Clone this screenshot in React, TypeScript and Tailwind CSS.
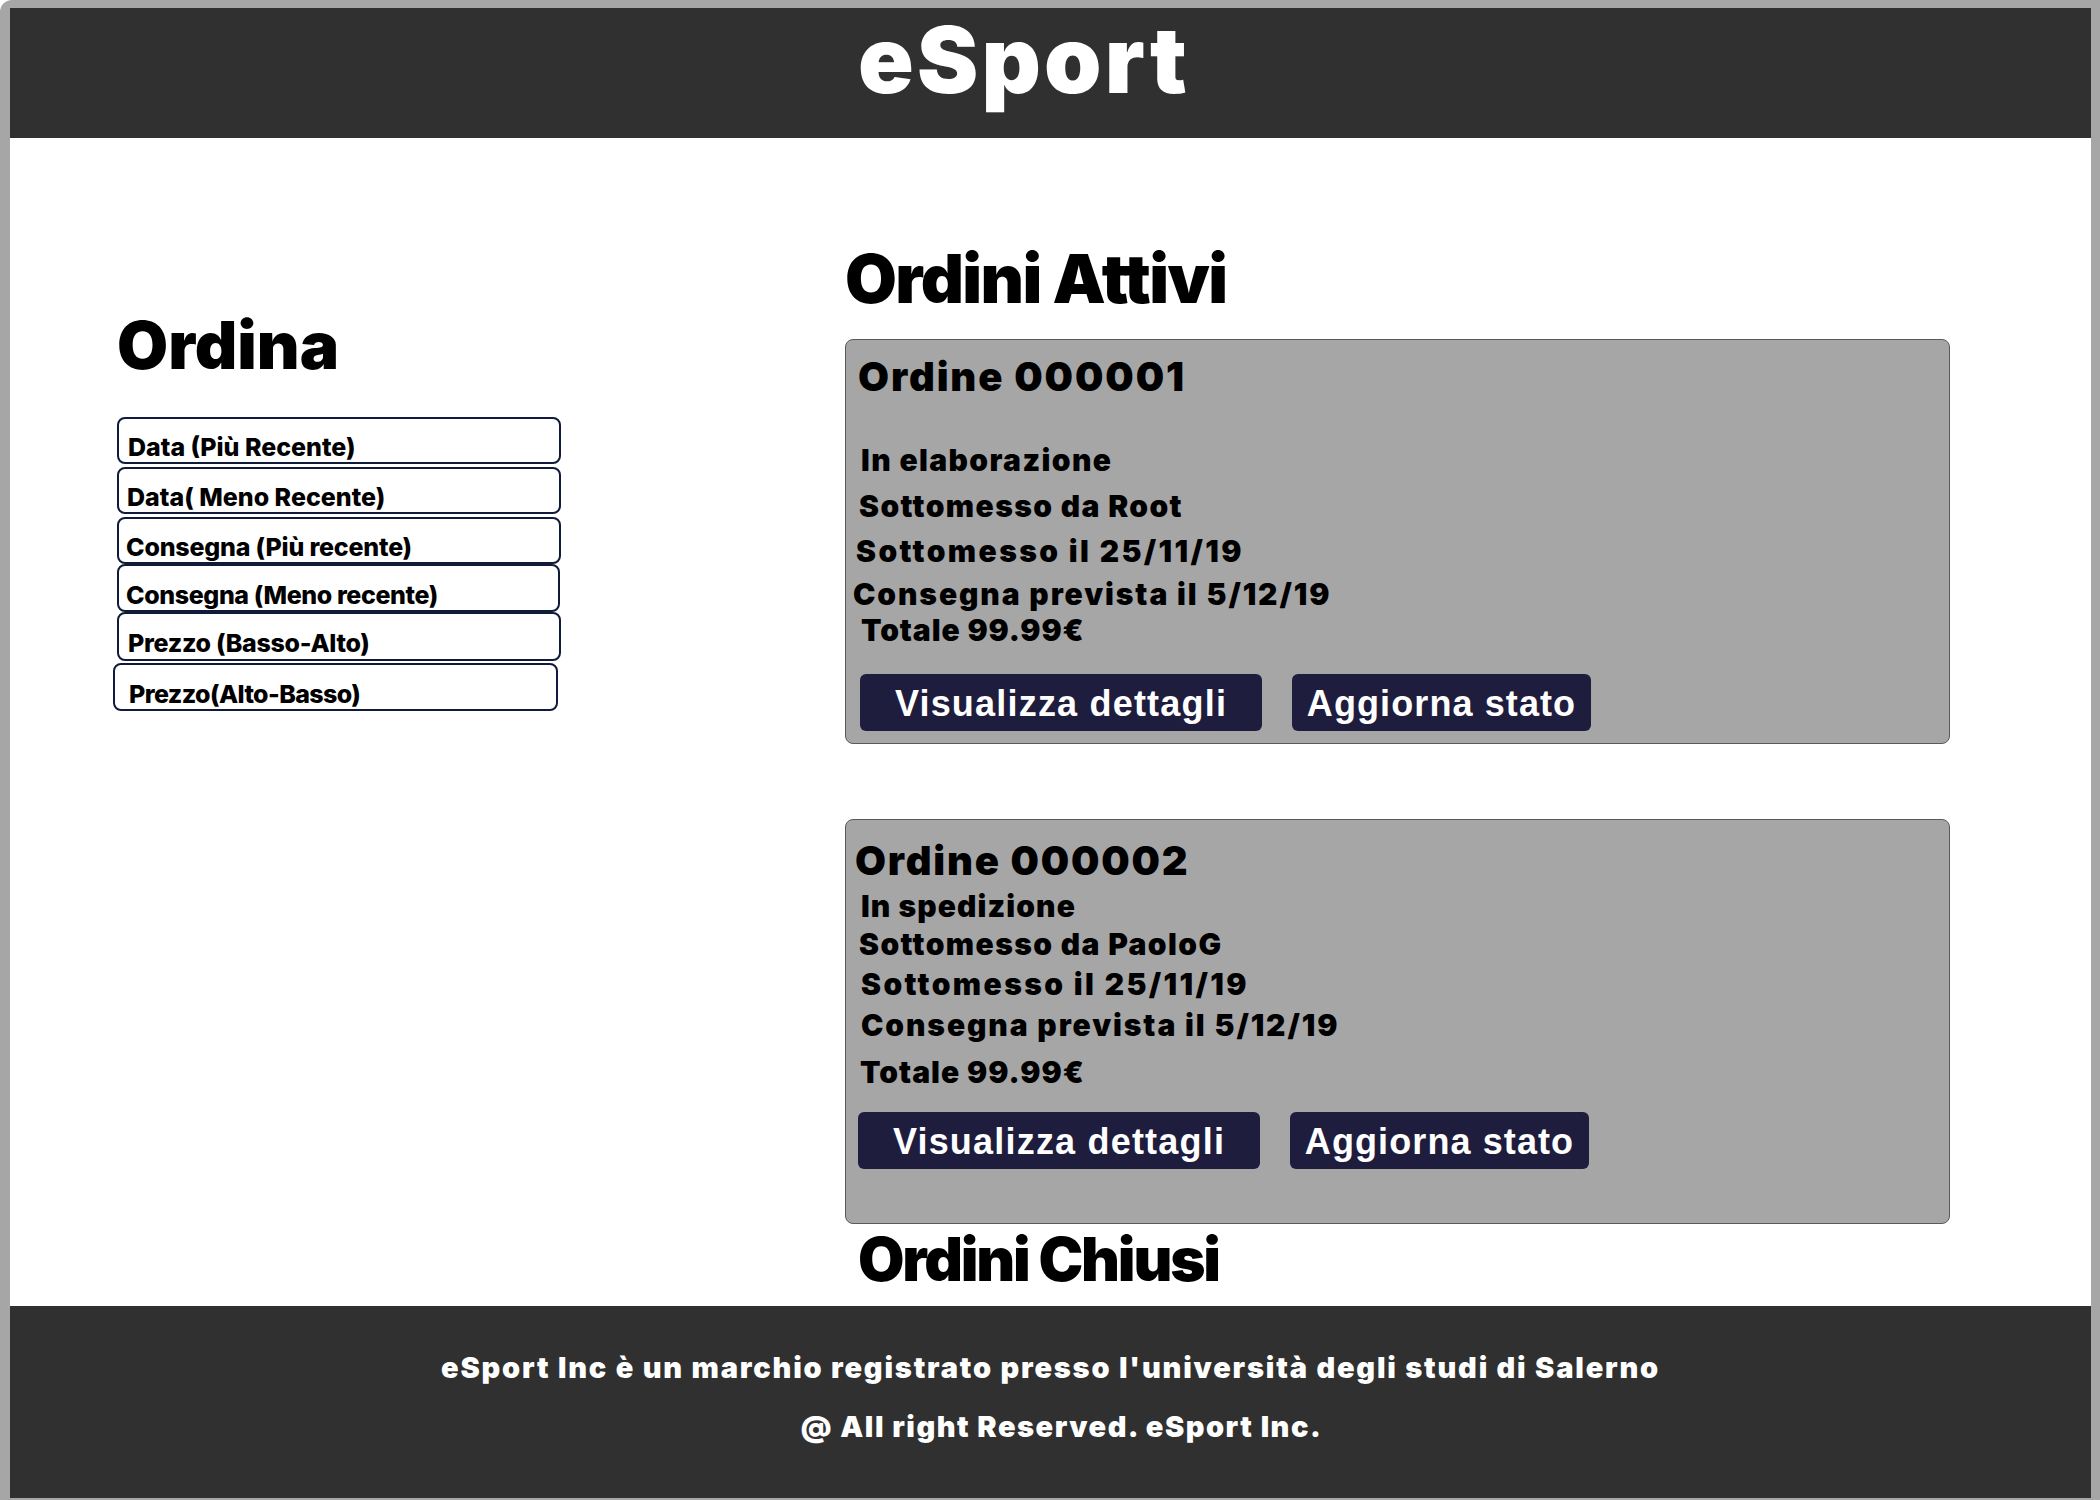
import React from "react"

const sortOptions = [
  { label: "Data (Più Recente)", box: "h-[47px] mb-[3px] w-[444px]", text: "pl-[9px]" },
  { label: "Data( Meno Recente)", box: "h-[47px] mb-[3px] w-[444px]", text: "pl-[8px]" },
  { label: "Consegna (Più recente)", box: "h-[47px] w-[444px] tracking-[-0.2px]", text: "pl-[7px]" },
  { label: "Consegna (Meno recente)", box: "h-[48px] w-[443px] tracking-[-0.4px]", text: "pl-[7px]" },
  { label: "Prezzo (Basso-Alto)", box: "h-[49px] mb-[2px] w-[444px] tracking-[-0.3px]", text: "pl-[9px]" },
  { label: "Prezzo(Alto-Basso)", box: "h-[48px] -ml-[4px] w-[445px] tracking-[-0.6px]", text: "pl-[14px]" },
]

interface OrderLine {
  text: string
  cls: string
}

interface Order {
  id: string
  titleCls: string
  lines: OrderLine[]
  buttonsCls: string
}

const orders: Order[] = [
  {
    id: "000001",
    titleCls: "mt-[17px] tracking-[1.9px]",
    lines: [
      { text: "In elaborazione", cls: "mt-[48px] ml-[3px] tracking-[1.4px]" },
      { text: "Sottomesso da Root", cls: "mt-[16px] ml-[1px] tracking-[1.4px]" },
      { text: "Sottomesso il 25/11/19", cls: "mt-[15px] -ml-[2px] tracking-[2.4px]" },
      { text: "Consegna prevista il 5/12/19", cls: "mt-[13px] -ml-[5px] tracking-[1.9px]" },
      { text: "Totale 99.99€", cls: "mt-[6px] ml-[3px] tracking-[0.9px]" },
    ],
    buttonsCls: "mt-[29px] ml-[2px]",
  },
  {
    id: "000002",
    titleCls: "mt-[21px] -ml-[3px] tracking-[1.8px]",
    lines: [
      { text: "In spedizione", cls: "mt-[10px] ml-[3px] tracking-[1.1px]" },
      { text: "Sottomesso da PaoloG", cls: "mt-[8px] ml-[1px] tracking-[1.4px]" },
      { text: "Sottomesso il 25/11/19", cls: "mt-[10px] ml-[3px] tracking-[2.4px]" },
      { text: "Consegna prevista il 5/12/19", cls: "mt-[11px] ml-[3px] tracking-[1.9px]" },
      { text: "Totale 99.99€", cls: "mt-[17px] ml-[2px] tracking-[1px]" },
    ],
    buttonsCls: "mt-[25px]",
  },
]

function OrderCard({ order, className }: { order: Order; className?: string }) {
  return (
    <div
      className={`h-[405px] w-[1105px] rounded-[8px] border border-[#5a5a5a] bg-[#a6a6a6] pl-[12px] text-black ${className ?? ""}`}
    >
      <h3 className={`text-[40px] leading-none font-black ${order.titleCls}`}>Ordine {order.id}</h3>
      {order.lines.map((line) => (
        <p key={line.text} className={`text-[30px] leading-none font-black ${line.cls}`}>
          {line.text}
        </p>
      ))}
      <div className={`flex gap-[30px] ${order.buttonsCls}`}>
        <button className="h-[57px] w-[402px] self-start rounded-[6px] bg-[#1f1d3e] pt-[2px] text-center font-['Liberation_Sans',Arial,sans-serif] text-[36px] leading-none font-bold tracking-[1.2px] text-white">
          Visualizza dettagli
        </button>
        <button className="h-[57px] w-[299px] self-start rounded-[6px] bg-[#1f1d3e] pt-[2px] text-center font-['Liberation_Sans',Arial,sans-serif] text-[36px] leading-none font-bold tracking-[1.1px] text-white">
          Aggiorna stato
        </button>
      </div>
    </div>
  )
}

export default function App() {
  return (
    <div className="h-[1500px] w-[2100px] overflow-hidden rounded-tl-[12px] bg-[#a6a6a6] pt-[8px] pl-[10px] pr-[9px] font-['Inter',sans-serif]">
      <header className="flex h-[130px] justify-center bg-[#303030] pr-[56px]">
        <h1 className="pt-[6px] pl-[3px] text-[92px] leading-none font-black tracking-[3.2px] text-white">eSport</h1>
      </header>

      <main className="flex h-[1168px] overflow-hidden bg-white">
        <aside className="w-[835px] shrink-0 pl-[107px] pt-[174px]">
          <h2 className="text-[66px] leading-none font-black text-black">Ordina</h2>
          <div className="mt-[39px] flex flex-col">
            {sortOptions.map((opt) => (
              <button
                key={opt.label}
                className={`rounded-[8px] border-2 border-[#101a3a] bg-white pt-[14px] text-left text-[25px] leading-none font-extrabold text-black ${opt.box} ${opt.text}`}
              >
                {opt.label}
              </button>
            ))}
          </div>
        </aside>

        <section className="flex-1 pt-[107px]">
          <h2 className="text-[67px] leading-none font-black tracking-[-1.6px] text-black">Ordini Attivi</h2>
          <OrderCard order={orders[0]} className="mt-[27px]" />
          <OrderCard order={orders[1]} className="mt-[75px]" />
          <h2 className="mt-[5px] ml-[13px] text-[60px] leading-none font-black tracking-[-2.2px] text-black">
            Ordini Chiusi
          </h2>
        </section>
      </main>

      <footer className="flex h-[192px] flex-col items-center bg-[#303030] pt-[47px] text-white">
        <p className="text-[29px] leading-none font-black tracking-[1.8px]">
          eSport Inc è un marchio registrato presso l'università degli studi di Salerno
        </p>
        <p className="mt-[30px] pl-[22px] text-[29px] leading-none font-black tracking-[1.5px]">
          @ All right Reserved. eSport Inc.
        </p>
      </footer>
    </div>
  )
}
